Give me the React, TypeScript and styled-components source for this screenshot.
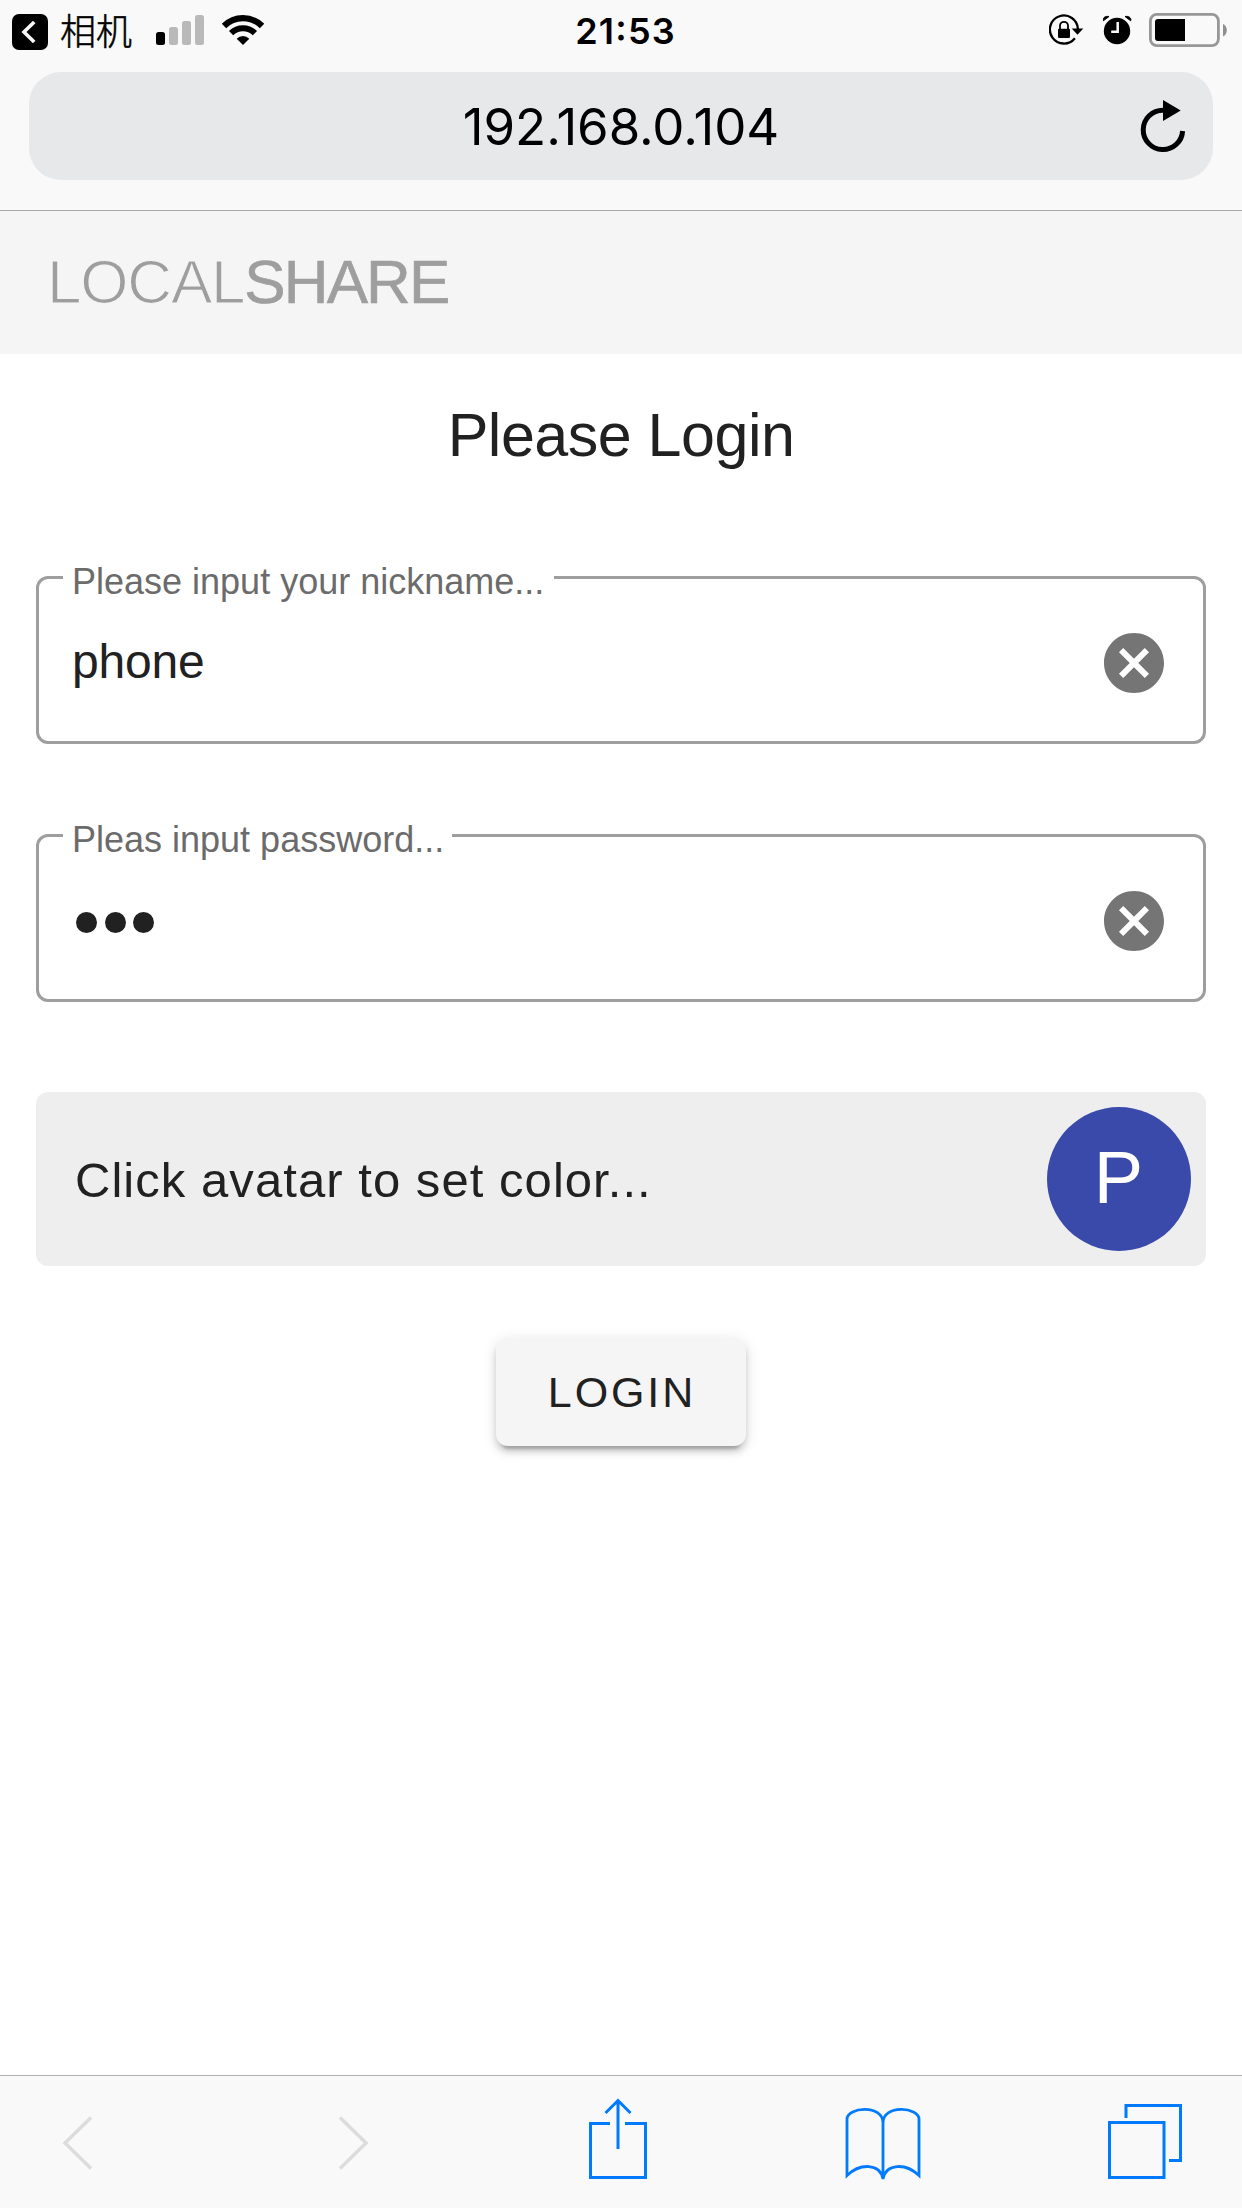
import React from "react";
import styled, { createGlobalStyle } from "styled-components";

const sans = `"Liberation Sans", Helvetica, Arial, sans-serif`;
const system = `Inter, "Liberation Sans", sans-serif`;

const GlobalStyle = createGlobalStyle`
  *, *::before, *::after { box-sizing: border-box; }
  body { margin: 0; background: #fff; }
  svg { display: block; }
`;

const Screen = styled.div`
  display: flex;
  flex-direction: column;
  width: 1242px;
  height: 2208px;
  background: #fff;
  color: #212121;
  font-family: ${sans};
`;

const BrowserTop = styled.div`
  flex: none;
  height: 211px;
  background: #f9f9f9;
  border-bottom: 1px solid #a9a9a9;
`;

const StatusBar = styled.div`
  display: grid;
  grid-template-columns: 1fr auto 1fr;
  height: 72px;
  padding: 13px 15px 0 12px;
  color: #000;
`;

const StatusSide = styled.div<{ $end?: boolean }>`
  display: flex;
  align-items: flex-start;
  justify-content: ${(p) => (p.$end ? "flex-end" : "flex-start")};
`;

const BackApp = styled.span`
  width: 75px;
  margin: 0 21px 0 11px;
  font: 300 36px/33px "Noto Sans CJK SC", sans-serif;
  -webkit-text-stroke: 0.5px #000;
  white-space: nowrap;
`;

const Clock = styled.div`
  margin-right: -12px;
  font: 600 36px/37px ${system};
  letter-spacing: 1.2px;
  font-feature-settings: "case";
`;

const AddressBar = styled.div`
  display: grid;
  grid-template-columns: 1fr auto 1fr;
  align-items: center;
  height: 108px;
  margin: 0 29px;
  padding-right: 27px;
  padding-left: 27px;
  border-radius: 32px;
  background: #e6e8ea;
  color: #000;
`;

const Address = styled.span`
  grid-column: 2;
  padding-top: 1px;
  font: 400 51px/60px ${system};
  letter-spacing: -0.05px;
`;

const Reload = styled.svg`
  justify-self: end;
`;

const AppHeader = styled.header`
  display: flex;
  align-items: center;
  flex: none;
  height: 143px;
  padding: 0 0 2px 47px;
  background: #f5f5f5;
  color: #9e9e9e;
  font-size: 62px;
  line-height: 72px;
`;

const LogoThin = styled.span`
  letter-spacing: -1.2px;
  -webkit-text-stroke: 1.2px #f5f5f5;
`;

const LogoStrong = styled.span`
  letter-spacing: -1.9px;
  -webkit-text-stroke: 0.6px #9e9e9e;
`;

const Main = styled.main`
  display: flex;
  flex: 1;
  flex-direction: column;
  padding: 45px 36px 0;
`;

const Title = styled.h1`
  margin: 0 0 87px;
  font-size: 61px;
  font-weight: 400;
  line-height: 72px;
  letter-spacing: -0.5px;
  text-align: center;
`;

const Field = styled.fieldset`
  display: flex;
  align-items: center;
  justify-content: space-between;
  min-width: 0;
  height: 186px;
  margin: 0 0 72px;
  padding: 30px 33px 0 36px;
  border: 3px solid #9e9e9e;
  border-radius: 12px;
`;

const FieldLabel = styled.legend<{ $width: number }>`
  width: ${(p) => p.$width}px;
  height: 39px;
  margin-left: -12px;
  padding-left: 9px;
  color: #6b6b6b;
  font-size: 36px;
  line-height: 47px;
  white-space: nowrap;
`;

const FieldValue = styled.span`
  margin-left: -3px;
  padding-bottom: 2px;
  font-size: 48px;
  line-height: 56px;
  letter-spacing: -0.2px;
`;

const Dots = styled.span`
  display: flex;
  gap: 7.5px;
  padding: 3px 0 0 1px;
`;

const Dot = styled.i`
  width: 21px;
  height: 21px;
  border-radius: 50%;
  background: #212121;
`;

const ClearButton = styled.button`
  padding: 0;
  border: 0;
  background: none;
  color: #757575;
`;

const AvatarPanel = styled.section`
  display: flex;
  align-items: center;
  justify-content: space-between;
  height: 174px;
  margin-top: 18px;
  padding: 0 15px 0 39px;
  border-radius: 12px;
  background: #eee;
`;

const AvatarHint = styled.span`
  padding-top: 2px;
  font-size: 49px;
  letter-spacing: 1.05px;
`;

const Avatar = styled.div`
  display: flex;
  align-items: center;
  justify-content: center;
  width: 144px;
  height: 144px;
  padding: 0 1px 4px 0;
  border-radius: 50%;
  background: #394aab;
  color: #fff;
  font-size: 74px;
`;

const LoginButton = styled.button`
  align-self: center;
  width: 250px;
  height: 108px;
  margin-top: 72px;
  padding: 0 0 0 2px;
  border: 0;
  border-radius: 12px;
  background: #f5f5f5;
  color: #212121;
  box-shadow: 0 9px 3px -6px rgba(0, 0, 0, 0.2), 0 6px 6px rgba(0, 0, 0, 0.14),
    0 3px 15px rgba(0, 0, 0, 0.12);
  font: 400 43px/50px ${sans};
  letter-spacing: 2.9px;
`;

const Toolbar = styled.nav`
  display: grid;
  flex: none;
  grid-template-columns: 276px 250px 257px 262px 76px;
  height: 133px;
  padding: 20px 0 0 62px;
  border-top: 1px solid #b0b0b0;
  background: #f9f9f9;
`;

const ClearIcon = () => (
  <svg width="72" height="72" viewBox="0 0 24 24" fill="currentColor">
    <path d="M12 2C6.47 2 2 6.47 2 12s4.47 10 10 10 10-4.47 10-10S17.53 2 12 2zm5 13.59L15.59 17 12 13.41 8.41 17 7 15.59 10.59 12 7 8.41 8.41 7 12 10.59 15.59 7 17 8.41 13.41 12 17 15.59z" />
  </svg>
);

const BackBadge = () => (
  <svg width="37" height="38" viewBox="12 13 37 38">
    <rect x="12" y="14" width="36" height="36" rx="7" />
    <path d="M34.200 22L24 32l10.200 10" fill="none" stroke="#f9f9f9" strokeWidth="3.600" />
  </svg>
);

const Signal = () => (
  <svg width="48" height="34" viewBox="156 13 48 34">
    <rect x="156" y="32" width="9" height="13" rx="2.500" />
    <g fill="#b9b9b9">
      <rect x="169" y="27" width="9" height="18" rx="2.500" />
      <rect x="182" y="21" width="9" height="24" rx="2.500" />
      <rect x="195" y="15" width="9" height="30" rx="2.500" />
    </g>
  </svg>
);

const Wifi = () => (
  <svg width="60" height="34" viewBox="204 13 60 34">
    <g fill="none" stroke="#000">
      <path d="M224 26A26.900 26.900 0 0 1 262 26" strokeWidth="6.200" />
      <path d="M231.100 33.100A16.800 16.800 0 0 1 254.900 33.100" strokeWidth="6" />
    </g>
    <path d="M243 45l-6.300-6.300A8.900 8.900 0 0 1 249.300 38.700z" />
  </svg>
);

const RotationLock = () => (
  <svg width="54" height="34" viewBox="1049 13 54 34">
    <path d="M1077.900 29A14 14 0 1 0 1074.900 38.200" fill="none" stroke="#000" strokeWidth="2.300" />
    <path d="M1071.700 28.500h11.600l-5.800 6.200z" />
    <rect x="1058" y="28.800" width="12" height="9.200" rx="1.200" />
    <path d="M1060 30v-4.200a4 4 0 0 1 8 0V30" fill="none" stroke="#000" strokeWidth="1.800" />
  </svg>
);

const Alarm = () => (
  <svg width="46" height="34" viewBox="1103 13 46 34">
    <circle cx="1117" cy="31" r="13.200" />
    <path d="M1103.300 20.800c-1-3 2.200-5 5.700-4.300zM1130.700 20.800c1-3-2.200-5-5.700-4.300z" stroke="#000" />
    <path d="M1117.700 22v9.700h-6.500" fill="none" stroke="#f9f9f9" strokeWidth="2.500" />
  </svg>
);

const Battery = () => (
  <svg width="78" height="34" viewBox="1149 13 78 34">
    <rect x="1150.400" y="14.400" width="68" height="31.200" rx="6.500" fill="none" stroke="#979797" strokeWidth="2.800" />
    <path d="M1158 19h27v22h-27a3 3 0 0 1-3-3V22a3 3 0 0 1 3-3z" />
    <path d="M1223 24c5 2 5 10.500 0 12.500z" fill="#8f8f8f" />
  </svg>
);

interface FieldProps {
  label: string;
  labelWidth: number;
  children: React.ReactNode;
}

const OutlinedField = ({ label, labelWidth, children }: FieldProps) => (
  <Field>
    <FieldLabel $width={labelWidth}>{label}</FieldLabel>
    {children}
    <ClearButton aria-label="Clear">
      <ClearIcon />
    </ClearButton>
  </Field>
);

export default function App() {
  return (
    <Screen>
      <GlobalStyle />
      <BrowserTop>
        <StatusBar>
          <StatusSide>
            <BackBadge />
            <BackApp>相机</BackApp>
            <Signal />
            <Wifi />
          </StatusSide>
          <Clock>21:53</Clock>
          <StatusSide $end>
            <RotationLock />
            <Alarm />
            <Battery />
          </StatusSide>
        </StatusBar>
        <AddressBar>
          <Address>192.168.0.104</Address>
          <Reload width="47" height="54" viewBox="1139 99 47 54">
            <path d="M1163 110.200A19.700 19.700 0 1 0 1182.600 131" fill="none" stroke="#000" strokeWidth="5" />
            <path d="M1163 100v21l17.700-10.500z" />
          </Reload>
        </AddressBar>
      </BrowserTop>
      <AppHeader>
        <LogoThin>LOCAL</LogoThin>
        <LogoStrong>SHARE</LogoStrong>
      </AppHeader>
      <Main>
        <Title>Please Login</Title>
        <OutlinedField label="Please input your nickname..." labelWidth={491}>
          <FieldValue>phone</FieldValue>
        </OutlinedField>
        <OutlinedField label="Pleas input password..." labelWidth={389}>
          <Dots aria-label="Password">
            <Dot />
            <Dot />
            <Dot />
          </Dots>
        </OutlinedField>
        <AvatarPanel>
          <AvatarHint>Click avatar to set color...</AvatarHint>
          <Avatar>P</Avatar>
        </AvatarPanel>
        <LoginButton>LOGIN</LoginButton>
      </Main>
      <Toolbar>
        <svg width="30" height="90" viewBox="62 2096 30 90" fill="none" stroke="#dcdcdc" strokeWidth="3.400">
          <path d="M91 2117.500L65 2143l26 25.500" />
        </svg>
        <svg width="30" height="90" viewBox="338 2096 30 90" fill="none" stroke="#dcdcdc" strokeWidth="3.400">
          <path d="M340 2117.500L366 2143l-26 25.500" />
        </svg>
        <svg width="60" height="90" viewBox="589 2096 60 90" fill="none" stroke="#007aff" strokeWidth="3">
          <path d="M611 2123.500h-19.500v54h55v-54H626M619 2149v-48M606.500 2113L619 2100.500l12.500 12.500" />
        </svg>
        <svg width="76" height="90" viewBox="845 2096 76 90" fill="none" stroke="#007aff" strokeWidth="2.800">
          <path d="M883 2179c-3-16-23-16-36-3.500V2119c0-12 36-15 36 4zM883 2179c3-16 23-16 36-3.500V2119c0-12-36-15-36 4z" />
        </svg>
        <svg width="76" height="90" viewBox="1107 2096 76 90" fill="none" stroke="#007aff" strokeWidth="3">
          <path d="M1109.500 2122.500h54.500v55h-54.500zM1126 2118v-12.500h54.500v55H1169" />
        </svg>
      </Toolbar>
    </Screen>
  );
}
